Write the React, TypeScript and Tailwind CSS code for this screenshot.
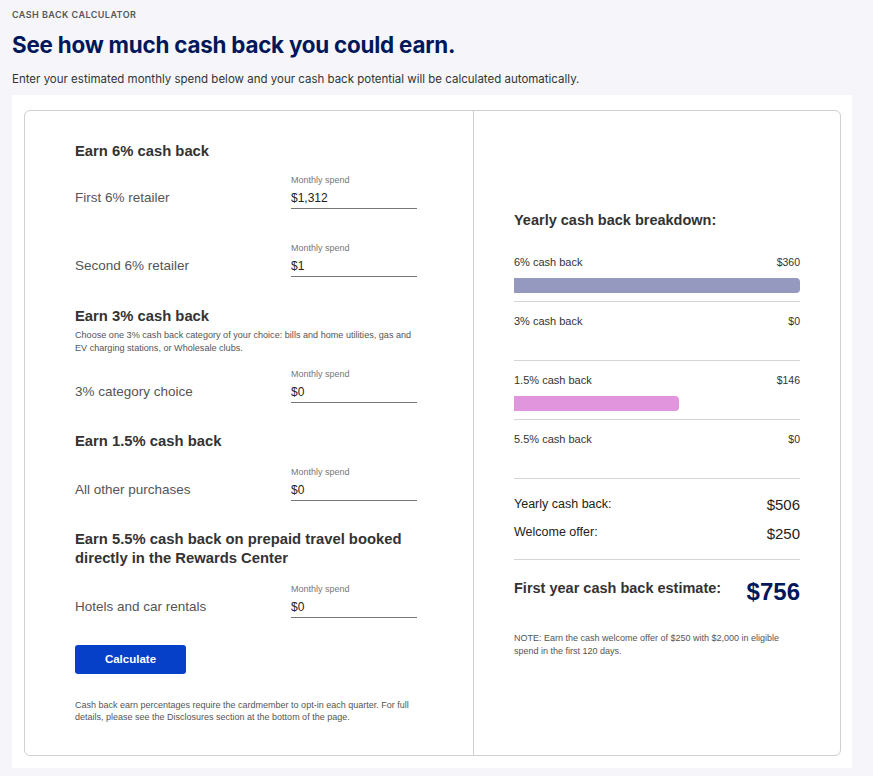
import React from "react";

const sans = { fontFamily: '"Liberation Sans", Arial, sans-serif' };

function SpendRow({ label, value }: { label: string; value: string }) {
  return (
    <div className="flex items-end">
      <div className="w-[216px] pb-[3px] text-[13.5px] leading-[16px] text-[#555]">{label}</div>
      <div className="w-[126px]">
        <div className="text-[9px] leading-[12px] text-[#777]">Monthly spend</div>
        <div className="mt-[4px] border-b border-[#777] pb-[2px] text-[12px] leading-[16px] text-[#222]">
          {value}
        </div>
      </div>
    </div>
  );
}

function Heading({ children, className = "" }: { children: React.ReactNode; className?: string }) {
  return (
    <div className={`text-[14.8px] font-bold leading-[19px] text-[#333] ${className}`}>{children}</div>
  );
}

function BreakdownRow({
  label,
  amount,
  pct,
  color,
}: {
  label: string;
  amount: string;
  pct: number;
  color: string;
}) {
  return (
    <div className="border-b border-[#d4d4d8] pt-[12px] pb-[8px]">
      <div className="flex items-center justify-between leading-[14px] text-[#333]">
        <span className="text-[11px]">{label}</span>
        <span className="text-[10.5px]">{amount}</span>
      </div>
      <div className="mt-[9px] h-[15px]">
        {pct > 0 && (
          <div
            className="h-full rounded-r-[4px]"
            style={{ width: `${pct}%`, backgroundColor: color }}
          />
        )}
      </div>
    </div>
  );
}

export default function App() {
  return (
    <div className="min-h-[776px] w-full bg-[#f6f6fa] pl-[12px] pr-[21px]" style={sans}>
      <div style={{ fontFamily: "Inter, sans-serif" }}>
        <div className="pt-[9px] text-[9px] font-semibold uppercase leading-[12px] tracking-[0.05em] text-[#555]">
          Cash back calculator
        </div>
        <h1 className="mt-[10px] text-[22.4px] font-bold leading-[28px] tracking-[-0.01em] text-[#00175a]">
          See how much cash back you could earn.
        </h1>
        <p className="mt-[13px] text-[11.5px] leading-[14px] text-[#333]">
          Enter your estimated monthly spend below and your cash back potential will be calculated
          automatically.
        </p>
      </div>

      <div className="mt-[9px] bg-white pt-[15px] pb-[12px] pl-[12px] pr-[11px]">
        <div className="flex h-[646px] rounded-[6px] border border-[#cfcfd4]">
          {/* left column */}
          <div className="w-[449px] border-r border-[#cfcfd4] pl-[50px] pt-[31px]">
            <Heading>Earn 6% cash back</Heading>
            <div className="mt-[13px]">
              <SpendRow label="First 6% retailer" value="$1,312" />
            </div>
            <div className="mt-[33px]">
              <SpendRow label="Second 6% retailer" value="$1" />
            </div>

            <Heading className="mt-[30px]">Earn 3% cash back</Heading>
            <p className="mt-[3px] w-[342px] text-[9.1px] leading-[13px] text-[#555]">
              Choose one 3% cash back category of your choice: bills and home utilities, gas and EV
              charging stations, or Wholesale clubs.
            </p>
            <div className="mt-[13px]">
              <SpendRow label="3% category choice" value="$0" />
            </div>

            <Heading className="mt-[29px]">Earn 1.5% cash back</Heading>
            <div className="mt-[15px]">
              <SpendRow label="All other purchases" value="$0" />
            </div>

            <Heading className="mt-[29px] w-[345px]">
              Earn 5.5% cash back on prepaid travel booked directly in the Rewards Center
            </Heading>
            <div className="mt-[15px]">
              <SpendRow label="Hotels and car rentals" value="$0" />
            </div>

            <button className="mt-[27px] h-[29px] w-[111px] rounded-[3px] bg-[#0640c9] text-[11.5px] font-bold text-white">
              Calculate
            </button>

            <p className="mt-[25px] w-[350px] text-[9px] leading-[12px] text-[#555]">
              Cash back earn percentages require the cardmember to opt-in each quarter. For full
              details, please see the Disclosures section at the bottom of the page.
            </p>
          </div>

          {/* right column */}
          <div className="flex-1 px-[40px] pt-[99px]">
            <div className="text-[14.5px] font-bold leading-[20px] text-[#333]">
              Yearly cash back breakdown:
            </div>
            <div className="mt-[13px]">
              <BreakdownRow label="6% cash back" amount="$360" pct={100} color="#9599bf" />
              <BreakdownRow label="3% cash back" amount="$0" pct={0} color="#9599bf" />
              <BreakdownRow label="1.5% cash back" amount="$146" pct={57.7} color="#e095dd" />
              <BreakdownRow label="5.5% cash back" amount="$0" pct={0} color="#9599bf" />
            </div>

            <div className="border-b border-[#d4d4d8] pt-[15px] pb-[17px] text-[#222]">
              <div className="flex h-[20px] items-center justify-between">
                <span className="text-[12.5px]">Yearly cash back:</span>
                <span className="mt-[2px] text-[15px]">$506</span>
              </div>
              <div className="mt-[8px] flex h-[20px] items-center justify-between">
                <span className="text-[12.5px]">Welcome offer:</span>
                <span className="mt-[4px] text-[15px]">$250</span>
              </div>
            </div>

            <div className="mt-[18px] flex items-start justify-between">
              <span className="text-[14.5px] font-bold leading-[20px] text-[#333]">
                First year cash back estimate:
              </span>
              <span className="text-[24px] font-bold leading-[28px] text-[#00175a]">$756</span>
            </div>

            <p className="mt-[26px] w-[270px] text-[9px] leading-[13px] text-[#555]">
              NOTE: Earn the cash welcome offer of $250 with $2,000 in eligible spend in the first
              120 days.
            </p>
          </div>
        </div>
      </div>
    </div>
  );
}
